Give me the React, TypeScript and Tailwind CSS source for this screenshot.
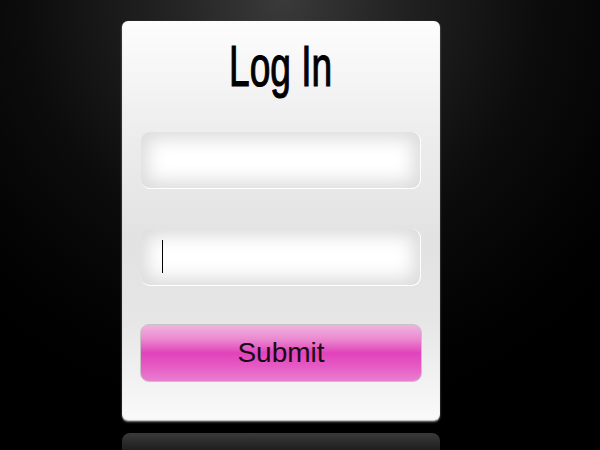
import React from 'react';

function Field({ focused = false }: { focused?: boolean }) {
  return (
    <div className="relative h-[57px] w-full rounded-[9px] border-r border-b border-white bg-white shadow-[inset_0_0_18px_7px_rgba(0,0,0,0.14)]">
      {focused && <span className="absolute left-[21px] top-[11px] h-[33px] w-px bg-black" />}
    </div>
  );
}

export default function App() {
  return (
    <div className="flex h-[450px] w-[600px] flex-col items-start overflow-hidden bg-black bg-[radial-gradient(ellipse_430px_420px_at_47%_0%,#3a3a3a_0%,#202020_30%,#0c0c0c_60%,#030303_85%,#000_100%)] pt-[21px] pl-[122px] font-['Liberation_Sans',Arial,sans-serif]">
      {/* card */}
      <div className="flex h-[400px] w-[318px] shrink-0 flex-col rounded-[6px] bg-[linear-gradient(180deg,#fdfdfd_0%,#ececec_30%,#e2e2e2_55%,#e6e6e6_75%,#fafafa_100%)] px-[19px] shadow-[0_1px_2px_rgba(255,255,255,0.5),inset_0_-1px_1px_rgba(0,0,0,0.25)]">
        <h1 className="mt-[16px] flex h-[58px] justify-center text-[58px] leading-[58px] font-normal text-black">
          <span className="inline-block scale-x-[0.64] [-webkit-text-stroke:1.2px_black]">Log In</span>
        </h1>
        <div className="mt-[37px]">
          <Field />
        </div>
        <div className="mt-[40px]">
          <Field focused />
        </div>
        <button
          type="button"
          className="-mx-px mt-[38px] h-[58px] rounded-[9px] border border-[#c4c4c4] bg-[linear-gradient(180deg,#f2b2df_0%,#ea8ad0_25%,#e143bb_50%,#e65cc4_75%,#e97fd0_100%)] text-[28px] leading-none text-[#1a0a14]"
        >
          Submit
        </button>
      </div>
      {/* reflection */}
      <div className="mt-[12px] h-[40px] w-[318px] shrink-0 rounded-t-[8px] bg-[linear-gradient(180deg,#3a3a3a_0%,#202020_40%,#080808_100%)]" />
    </div>
  );
}
